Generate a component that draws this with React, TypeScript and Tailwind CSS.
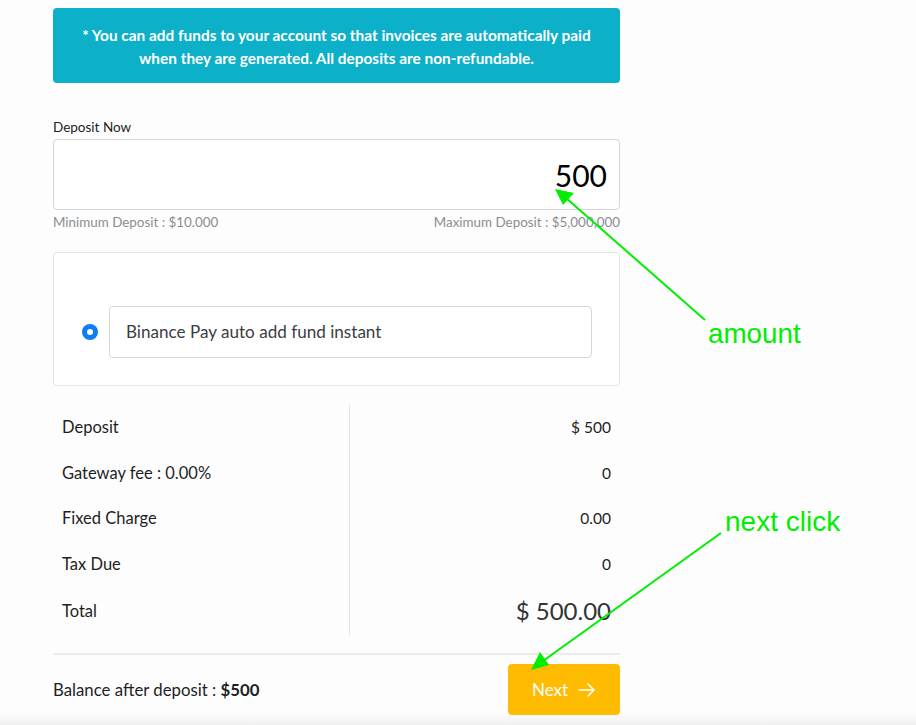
import React from "react";

const rows = [
  { label: "Deposit", value: "$ 500" },
  { label: "Gateway fee : 0.00%", value: "0" },
  { label: "Fixed Charge", value: "0.00" },
  { label: "Tax Due", value: "0" },
];

export default function App() {
  return (
    <div
      className="relative w-[916px] h-[725px] overflow-hidden bg-[#fdfdfd]"
      style={{ fontFamily: "Lato, 'Open Sans', sans-serif" }}
    >
      {/* bottom fade */}
      <div className="absolute left-0 right-0 bottom-0 h-[12px] bg-gradient-to-b from-[#fdfdfd] to-[#f0f0f0]" />

      <div className="relative ml-[53px] w-[567px] pt-[8px] flex flex-col">
        {/* Banner */}
        <div className="h-[75px] rounded-[4px] bg-[#0cb0c9] flex items-center justify-center text-center text-white font-bold text-[15.4px] leading-[23px]">
          <p className="mt-[2px]">
            * You can add funds to your account so that invoices are automatically paid
            <br />
            when they are generated. All deposits are non-refundable.
          </p>
        </div>

        {/* Deposit now */}
        <label className="mt-[35px] text-[13.5px] leading-[18px] text-[#222]">Deposit Now</label>
        <div className="mt-[3px] h-[71px] rounded-[4px] border border-[#d4d6da] bg-white flex items-center justify-end pr-[12px]">
          <span className="text-[30px] text-black leading-none mt-[1px]">500</span>
        </div>
        <div className="mt-[4px] flex justify-between text-[13.4px] leading-[17px] text-[#8a8d91]">
          <span>Minimum Deposit : $10.000</span>
          <span>Maximum Deposit : $5,000,000</span>
        </div>

        {/* Gateway card */}
        <div className="mt-[21px] h-[134px] rounded-[4px] border border-[#e3e5e8] bg-white flex items-start pt-[53px] pl-[28px] pr-[27px]">
          <div className="flex items-center w-full">
            <div className="w-[16px] h-[16px] rounded-full bg-[#0d7df5] flex items-center justify-center shrink-0">
              <div className="w-[6px] h-[6px] rounded-full bg-white" />
            </div>
            <div className="ml-[11px] flex-1 h-[52px] rounded-[4px] border border-[#d4d6da] bg-white flex items-center pl-[16px] text-[17.1px] text-[#3a3d42]">
              Binance Pay auto add fund instant
            </div>
          </div>
        </div>

        {/* Summary table */}
        <div className="mt-[18px] flex">
          <div className="w-[297px] border-r border-[#e6e6e6] py-[1px]">
            {rows.map((r) => (
              <div key={r.label} className="h-[45.5px] flex items-center pl-[9px] text-[16.5px] text-[#1f1f1f]">
                {r.label}
              </div>
            ))}
            <div className="h-[48px] flex items-center pl-[9px] text-[16.5px] text-[#1f1f1f]">Total</div>
          </div>
          <div className="flex-1 py-[1px]">
            {rows.map((r) => (
              <div key={r.label} className="h-[45.5px] flex items-center justify-end pr-[9px] text-[15.5px] text-[#1f1f1f]">
                {r.value}
              </div>
            ))}
            <div className="h-[48px] flex items-center justify-end pr-[9px] text-[24px] text-[#333]">$ 500.00</div>
          </div>
        </div>

        <div className="mt-[17px] h-[2px] bg-[#ebebeb]" />

        {/* Footer */}
        <div className="mt-[9px] flex items-center justify-between">
          <span className="text-[16.8px] text-[#1f1f1f]">
            Balance after deposit : <b className="font-bold">$500</b>
          </span>
          <button className="w-[112px] h-[51px] rounded-[4px] bg-[#ffbb00] text-white text-[17px] flex items-center justify-center gap-[10px]">
            <span>Next</span>
            <svg width="18" height="16" viewBox="0 0 18 16" fill="none" stroke="white" strokeWidth="1.6" strokeLinecap="round" strokeLinejoin="round">
              <path d="M1 8h15M10 2l6 6-6 6" />
            </svg>
          </button>
        </div>
      </div>

      {/* Annotations */}
      <svg className="absolute left-0 top-0 pointer-events-none" width="916" height="725">
        <line x1="705" y1="320" x2="566" y2="198" stroke="#00ee00" strokeWidth="2" />
        <polygon points="555,189 574,193 563,205" fill="#00ee00" />
        <line x1="721" y1="533" x2="543" y2="661" stroke="#00ee00" strokeWidth="2" />
        <polygon points="531,670 540,652 549,665" fill="#00ee00" />
      </svg>
      <span
        className="absolute left-[708px] top-[316px] text-[27.8px] leading-[36px] text-[#00ee00]"
        style={{ fontFamily: "'Liberation Sans', Arial, sans-serif" }}
      >
        amount
      </span>
      <span
        className="absolute left-[725px] top-[504px] text-[28px] leading-[36px] text-[#00ee00]"
        style={{ fontFamily: "'Liberation Sans', Arial, sans-serif" }}
      >
        next click
      </span>
    </div>
  );
}
